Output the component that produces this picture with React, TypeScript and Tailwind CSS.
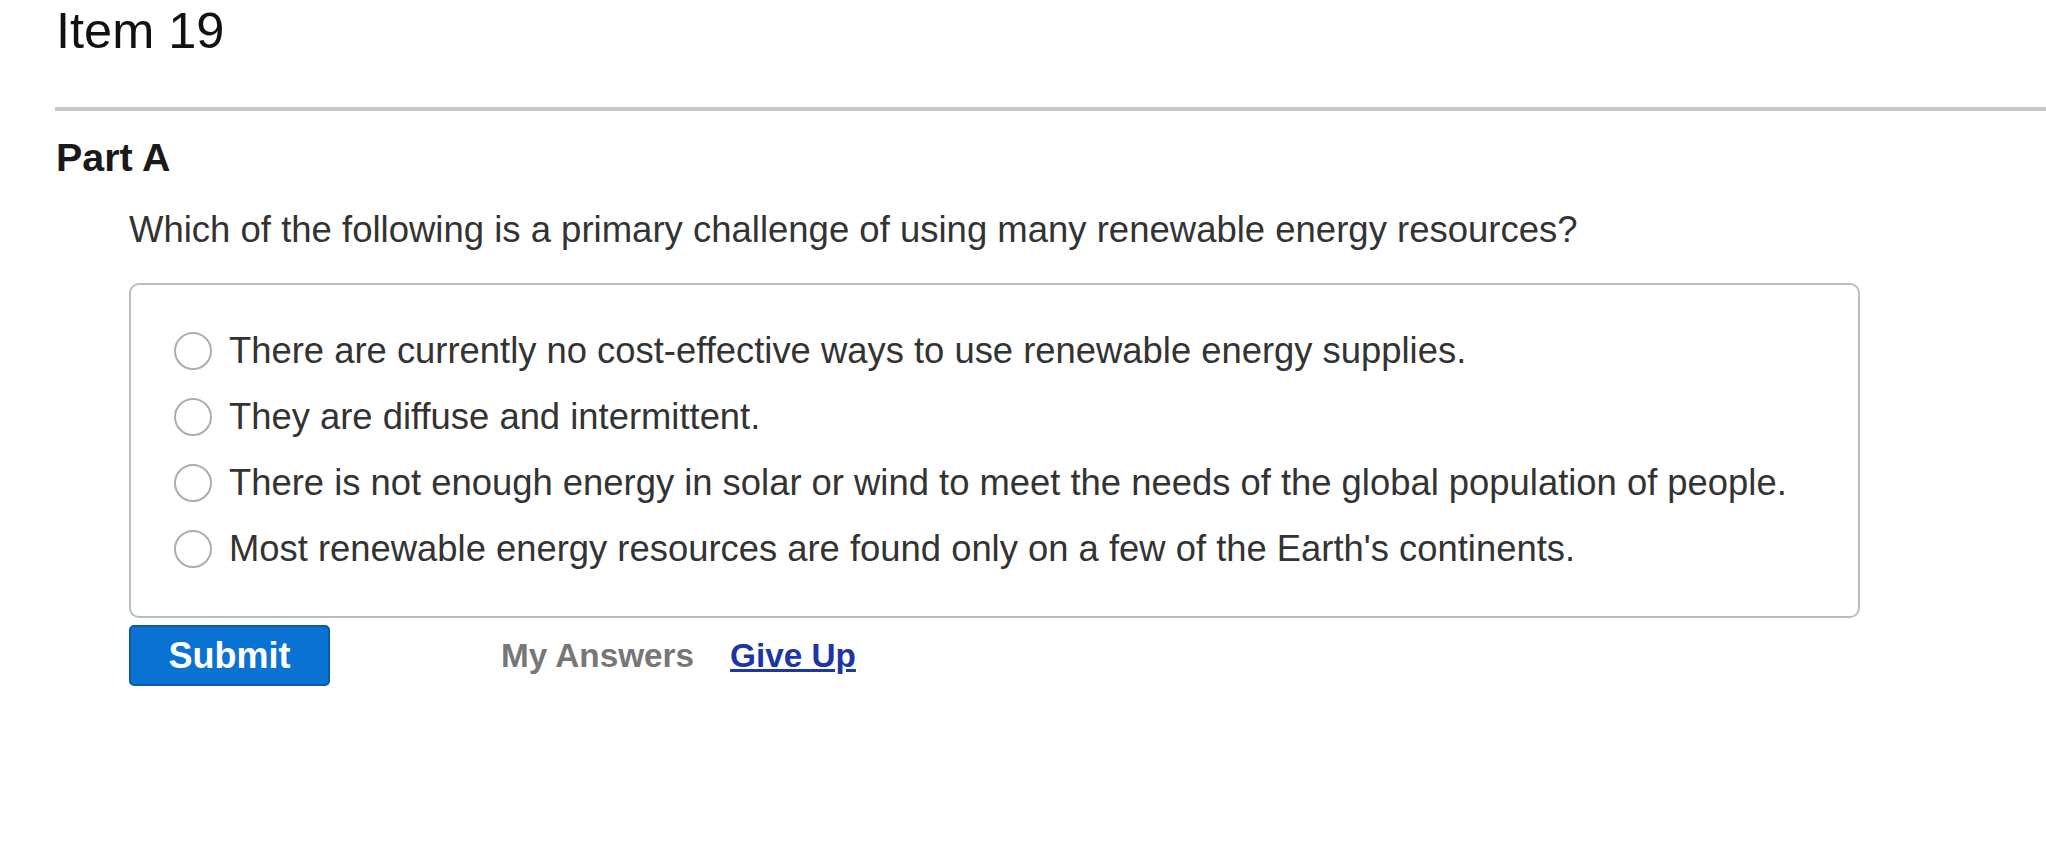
const OPTIONS = [
  'There are currently no cost-effective ways to use renewable energy supplies.',
  'They are diffuse and intermittent.',
  'There is not enough energy in solar or wind to meet the needs of the global population of people.',
  "Most renewable energy resources are found only on a few of the Earth's continents.",
]

export default function App() {
  return (
    <div className="min-h-[846px] bg-white pl-[55px] pt-[3px] font-['Liberation_Sans',Arial,sans-serif]">
      <h1 className="ml-[1px] text-[50.5px] leading-[56px] text-[#111]">Item 19</h1>

      <div className="mt-[48px] h-[4px] bg-[#c9c9c9]" />

      <h2 className="mt-[24px] ml-[1px] text-[39.4px] leading-[44px] font-bold text-[#1a1a1a]">Part A</h2>

      <div className="pl-[74px]">
        <p className="mt-[30px] text-[36.5px] leading-[42px] text-[#333]">
          Which of the following is a primary challenge of using many renewable energy resources?
        </p>

        <div className="mt-[32px] w-[1731px] rounded-[10px] border-2 border-[#bcbcbc] pl-[43px] pt-[33px] pb-[34px]">
          {OPTIONS.map((text, i) => (
            <label key={i} className="flex h-[66px] items-center gap-[17px]">
              <span className="h-[38px] w-[38px] shrink-0 rounded-full border-2 border-[#adadad] bg-white" />
              <span className="text-[36.4px] leading-[66px] text-[#333]">{text}</span>
            </label>
          ))}
        </div>

        <div className="mt-[7px] flex items-center">
          <button className="flex h-[61px] w-[201px] items-center justify-center rounded-[5px] border-2 border-[#0b5aa4] bg-[#0a72d3] text-[36px] leading-[42px] font-bold text-white">
            Submit
          </button>
          <span className="ml-[171px] text-[33.3px] leading-[40px] font-bold text-[#777]">My Answers</span>
          <a href="#" className="ml-[36px] text-[33.3px] leading-[40px] font-bold text-[#1c36a6] underline">
            Give Up
          </a>
        </div>
      </div>
    </div>
  )
}
